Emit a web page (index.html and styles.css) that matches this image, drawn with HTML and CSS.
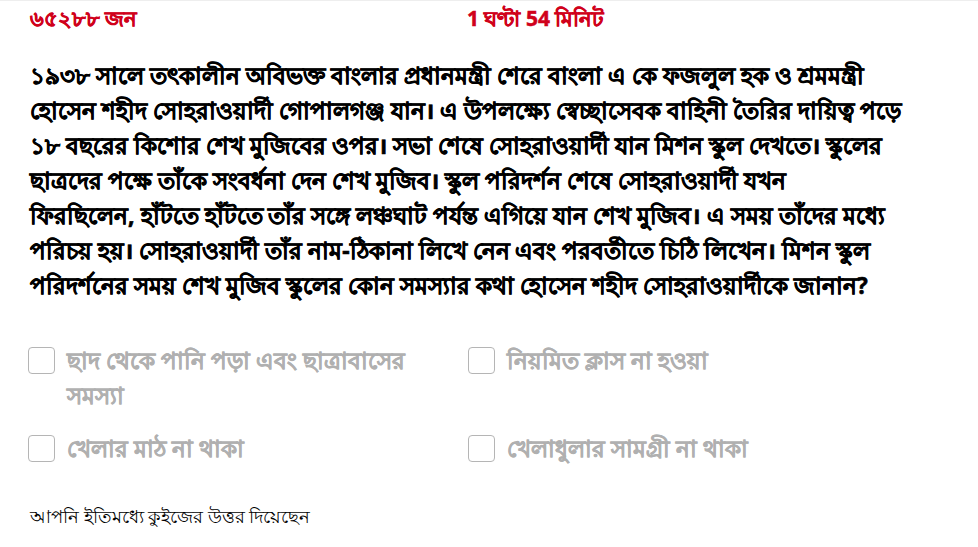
FILE: index.html
```html
<!DOCTYPE html>
<html lang="bn">
<head>
<meta charset="utf-8">
<link rel="stylesheet" href="styles.css">
</head>
<body>
<div class="quiz">
  <div class="meta">
    <div class="meta-item">৬৫২৮৮ জন</div>
    <div class="meta-item">1 ঘণ্টা 54 মিনিট</div>
  </div>
  <p class="question">১৯৩৮ সালে তৎকালীন অবিভক্ত বাংলার প্রধানমন্ত্রী শেরে বাংলা এ কে ফজলুল হক ও শ্রমমন্ত্রী<br>হোসেন শহীদ সোহরাওয়ার্দী গোপালগঞ্জ যান। এ উপলক্ষ্যে স্বেচ্ছাসেবক বাহিনী তৈরির দায়িত্ব পড়ে<br>১৮ বছরের কিশোর শেখ মুজিবের ওপর। সভা শেষে সোহরাওয়ার্দী যান মিশন স্কুল দেখতে। স্কুলের<br>ছাত্রদের পক্ষে তাঁকে সংবর্ধনা দেন শেখ মুজিব। স্কুল পরিদর্শন শেষে সোহরাওয়ার্দী যখন<br>ফিরছিলেন, হাঁটতে হাঁটতে তাঁর সঙ্গে লঞ্চঘাট পর্যন্ত এগিয়ে যান শেখ মুজিব। এ সময় তাঁদের মধ্যে<br>পরিচয় হয়। সোহরাওয়ার্দী তাঁর নাম-ঠিকানা লিখে নেন এবং পরবর্তীতে চিঠি লিখেন। মিশন স্কুল<br>পরিদর্শনের সময় শেখ মুজিব স্কুলের কোন সমস্যার কথা হোসেন শহীদ সোহরাওয়ার্দীকে জানান?</p>
  <div class="options">
    <label class="option"><span class="box"></span><span class="label">ছাদ থেকে পানি পড়া এবং ছাত্রাবাসের সমস্যা</span></label>
    <label class="option"><span class="box"></span><span class="label">নিয়মিত ক্লাস না হওয়া</span></label>
    <label class="option"><span class="box"></span><span class="label">খেলার মাঠ না থাকা</span></label>
    <label class="option"><span class="box"></span><span class="label">খেলাধুলার সামগ্রী না থাকা</span></label>
  </div>
  <p class="notice">আপনি ইতিমধ্যে কুইজের উত্তর দিয়েছেন</p>
</div>
</body>
</html>
```
FILE: styles.css
```css
html, body {
  margin: 0;
  padding: 0;
  background: #fff;
}
body {
  font-family: "Noto Sans", sans-serif;
  color: #000;
  border-top: 1px solid #eee;
}
.quiz {
  padding: 0 20px 0 28px;
}
.meta {
  display: grid;
  grid-template-columns: 437px 1fr;
  padding-left: 2px;
}
.meta-item {
  color: #d0011b;
  font-size: 21px;
  font-weight: 700;
  line-height: 35px;
  -webkit-text-stroke: 0.5px #d0011b;
}
.question {
  margin: 22px 0 0 2px;
  font-size: 23px;
  font-weight: 700;
  line-height: 35px;
  white-space: nowrap;
  -webkit-text-stroke: 0.6px #000;
}
.options {
  display: grid;
  grid-template-columns: 440px 440px;
  row-gap: 18px;
  margin-top: 40px;
}
.option {
  display: flex;
  gap: 12px;
  align-items: flex-start;
  color: #b0b0b0;
  font-size: 23px;
  font-weight: 700;
  line-height: 35px;
  -webkit-text-stroke: 0.4px #b0b0b0;
}
.box {
  flex: none;
  width: 27px;
  height: 27px;
  box-sizing: border-box;
  border: 1px solid #b5b5b5;
  border-radius: 4px;
  margin-top: 4px;
}
.label {
  max-width: 360px;
}
.notice {
  margin: 38px 0 0 2px;
  font-size: 17.5px;
  line-height: 24px;
}
```
